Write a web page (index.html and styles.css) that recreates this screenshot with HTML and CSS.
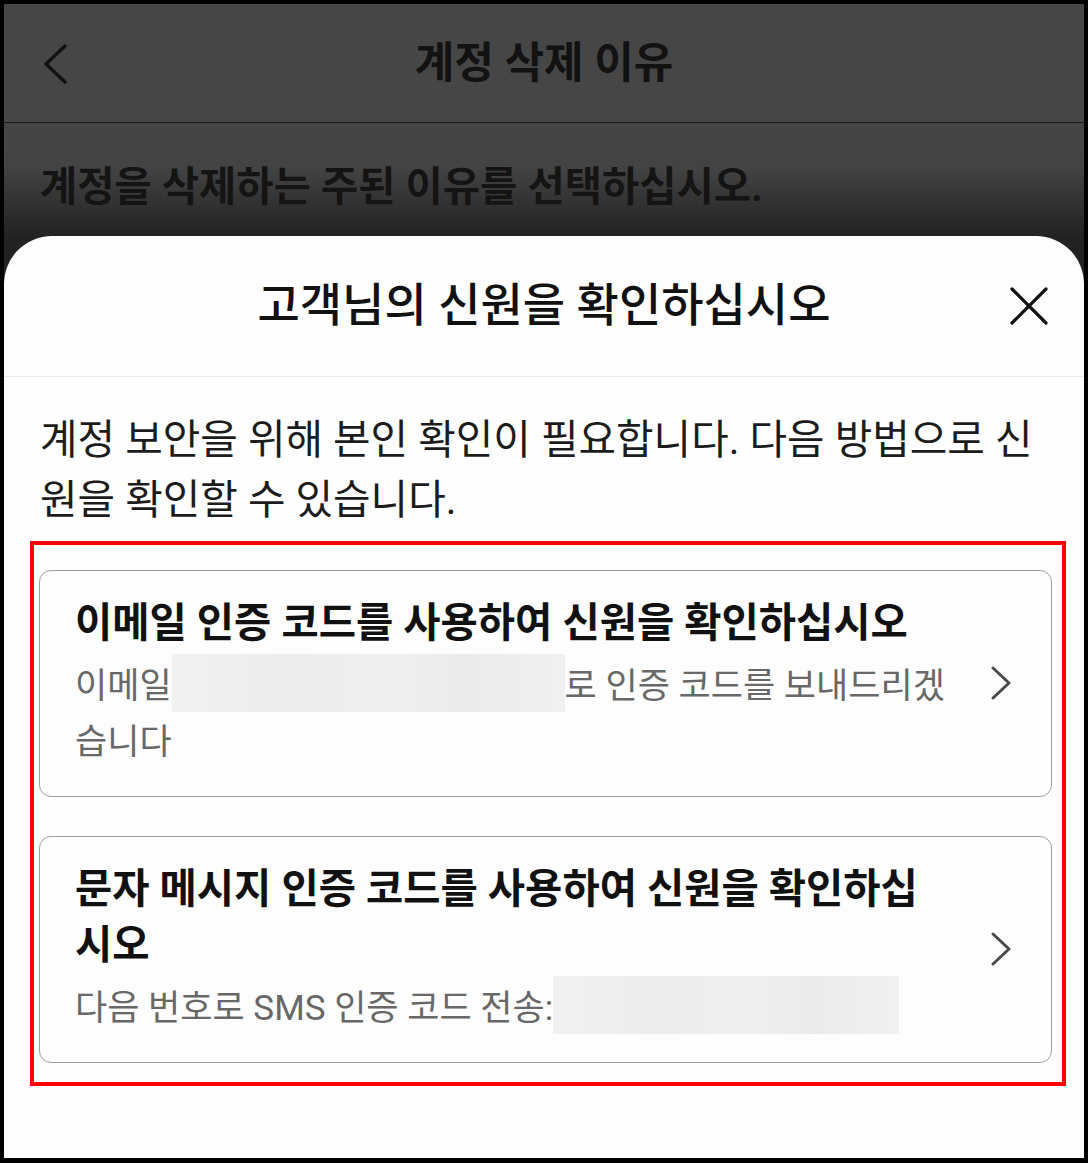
FILE: index.html
```html
<!DOCTYPE html>
<html lang="ko">
<head>
  <meta charset="UTF-8">
  <meta name="viewport" content="width=device-width, initial-scale=1.0">
  <title>계정 삭제 이유</title>
  <link rel="stylesheet" href="styles.css">
</head>
<body>

  <div class="screen">

    <!-- Page behind the sheet (dimmed) -->
    <header class="topbar">
      <svg class="back" width="24" height="40" viewBox="0 0 24 40">
        <path d="M21 2 L2 20 L21 38" fill="none" stroke="#111" stroke-width="3.4" stroke-linecap="round" stroke-linejoin="round"/>
      </svg>
      <h1>계정 삭제 이유</h1>
    </header>

    <div class="reason">계정을 삭제하는 주된 이유를 선택하십시오.</div>

    <!-- Bottom Sheet -->
    <section class="sheet">
      <div class="sheet-head">
        <h2>고객님의 신원을 확인하십시오</h2>
        <button class="close" aria-label="닫기">
          <svg width="40" height="40" viewBox="0 0 40 40">
            <path d="M3 3 L37 37 M37 3 L3 37" fill="none" stroke="#111" stroke-width="3.2" stroke-linecap="round"/>
          </svg>
        </button>
      </div>

      <p class="intro">계정 보안을 위해 본인 확인이 필요합니다. 다음 방법으로 신원을 확인할 수 있습니다.</p>

      <div class="options">
        <a class="option" href="#">
          <div class="option-text">
            <div class="option-title">이메일 인증 코드를 사용하여 신원을 확인하십시오</div>
            <div class="option-sub">이메일<span class="masked masked-email"></span>로 인증 코드를 보내드리겠습니다</div>
          </div>
          <svg class="chevron" width="24" height="36" viewBox="0 0 24 36">
            <path d="M4 3 L20 18 L4 33" fill="none" stroke="#4a4a4a" stroke-width="3" stroke-linecap="round" stroke-linejoin="round"/>
          </svg>
        </a>

        <a class="option" href="#">
          <div class="option-text">
            <div class="option-title">문자 메시지 인증 코드를 사용하여 신원을 확인하십시오</div>
            <div class="option-sub">다음 번호로 SMS 인증 코드 전송:<span class="masked masked-phone"></span></div>
          </div>
          <svg class="chevron" width="24" height="36" viewBox="0 0 24 36">
            <path d="M4 3 L20 18 L4 33" fill="none" stroke="#4a4a4a" stroke-width="3" stroke-linecap="round" stroke-linejoin="round"/>
          </svg>
        </a>
      </div>
    </section>

  </div>

</body>
</html>
```

FILE: styles.css
```css
/* Basic Reset */
* {
  margin: 0;
  padding: 0;
  box-sizing: border-box;
}

body {
  font-family: Roboto, "Noto Sans CJK KR", sans-serif;
  background-color: #000;
  color: #111;
}

/* Phone frame */
.screen {
  width: 1088px;
  height: 1163px;
  border: 4px solid #000;
  border-bottom-width: 5px;
  background-color: #222;
  display: flex;
  flex-direction: column;
  overflow: hidden;
}

/* Dimmed top bar */
.topbar {
  height: 119px;
  flex-shrink: 0;
  background-color: #464646;
  border-bottom: 1px solid #1b1b1b;
  display: grid;
  grid-template-columns: 80px 1fr 80px;
  align-items: center;
}

.topbar .back {
  margin-left: 40px;
  margin-top: 2px;
}

.topbar h1 {
  font-size: 43px;
  font-weight: 700;
  color: #121212;
  text-align: center;
  line-height: 1;
}

.reason {
  height: 113px;
  flex-shrink: 0;
  padding: 39px 0 0 36px;
  font-size: 40.5px;
  font-weight: 700;
  line-height: 50px;
  color: #141414;
  background: linear-gradient(#454545 0%, #434343 40%, #2a2a2a 85%, #232323 100%);
}

/* Bottom sheet */
.sheet {
  flex: 1;
  background-color: #fefefe;
  border-radius: 48px 48px 0 0;
}

.sheet-head {
  height: 141px;
  border-bottom: 1px solid #ececec;
  display: grid;
  grid-template-columns: 110px 1fr 110px;
  grid-template-areas: ". title close";
  align-items: center;
  padding-bottom: 2px;
}

.sheet-head h2 {
  grid-area: title;
  font-size: 46px;
  font-weight: 500;
  color: #111;
  text-align: center;
  line-height: 1;
}

.close {
  grid-area: close;
  justify-self: center;
  width: 40px;
  height: 40px;
  border: none;
  background: none;
  margin-top: 2px;
}

.close svg {
  display: block;
}

.intro {
  padding: 33px 36px 0 36px;
  font-size: 40.8px;
  line-height: 60px;
  color: #1c1c1c;
}

/* Highlighted option list */
.options {
  margin: 11px 18px 0 26px;
  border: 4px solid #f00;
  padding: 25px 10px 19px 5px;
  display: flex;
  flex-direction: column;
  gap: 39px;
}

.option {
  display: grid;
  grid-template-columns: 1fr 24px;
  column-gap: 42px;
  align-items: center;
  padding: 24px 38px 25px 35px;
  border: 1px solid #9e9e9e;
  border-radius: 12px;
  background-color: #fdfdfd;
  text-decoration: none;
}

.option-title {
  font-size: 40.5px;
  font-weight: 700;
  line-height: 56px;
  color: #111;
}

.option-sub {
  margin-top: 8px;
  font-size: 35px;
  line-height: 56px;
  color: #686868;
}

.masked {
  display: inline-block;
  height: 58px;
  vertical-align: top;
  margin-top: -5px;
  margin-bottom: -3px;
  background: linear-gradient(90deg, #f1f1f1 0%, #ececec 30%, #efefef 55%, #ebebeb 75%, #f0f0f0 100%);
}

.masked-email {
  width: 393px;
}

.masked-phone {
  width: 346px;
}

.chevron {
  display: block;
}
```
